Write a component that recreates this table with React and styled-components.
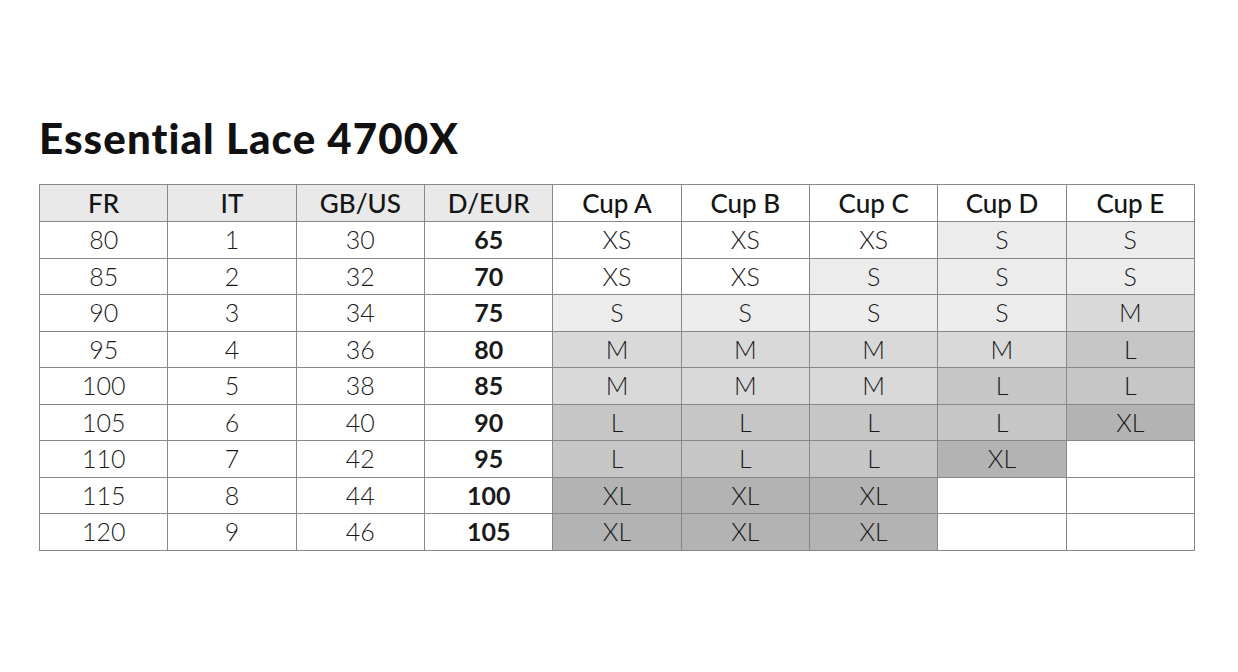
import styled, { createGlobalStyle } from "styled-components";

const GlobalStyle = createGlobalStyle`
  html, body {
    margin: 0;
    padding: 0;
    background: #ffffff;
  }
  body {
    font-family: Lato, "Liberation Sans", sans-serif;
    color: #1a1a1a;
  }
`;

const shades = {
  none: "#ffffff",
  s: "#ececec",
  m: "#d9d9d9",
  l: "#c6c6c6",
  xl: "#b3b3b3",
};

const headers = ["FR", "IT", "GB/US", "D/EUR", "Cup A", "Cup B", "Cup C", "Cup D", "Cup E"];

// [fr, it, gb, eur, cups as [label, shade]]
const rows = [
  ["80", "1", "30", "65", [["XS", "none"], ["XS", "none"], ["XS", "none"], ["S", "s"], ["S", "s"]]],
  ["85", "2", "32", "70", [["XS", "none"], ["XS", "none"], ["S", "s"], ["S", "s"], ["S", "s"]]],
  ["90", "3", "34", "75", [["S", "s"], ["S", "s"], ["S", "s"], ["S", "s"], ["M", "m"]]],
  ["95", "4", "36", "80", [["M", "m"], ["M", "m"], ["M", "m"], ["M", "m"], ["L", "l"]]],
  ["100", "5", "38", "85", [["M", "m"], ["M", "m"], ["M", "m"], ["L", "l"], ["L", "l"]]],
  ["105", "6", "40", "90", [["L", "l"], ["L", "l"], ["L", "l"], ["L", "l"], ["XL", "xl"]]],
  ["110", "7", "42", "95", [["L", "l"], ["L", "l"], ["L", "l"], ["XL", "xl"], ["", "none"]]],
  ["115", "8", "44", "100", [["XL", "xl"], ["XL", "xl"], ["XL", "xl"], ["", "none"], ["", "none"]]],
  ["120", "9", "46", "105", [["XL", "xl"], ["XL", "xl"], ["XL", "xl"], ["", "none"], ["", "none"]]],
];

function App() {
  return (
    <Page>
      <GlobalStyle />
      <Title>Essential Lace 4700X</Title>
      <SizeTable>
        <thead>
          <tr>
            {headers.map((h, i) => (
              <HeadCell key={h} $grey={i < 4}>{h}</HeadCell>
            ))}
          </tr>
        </thead>
        <tbody>
          {rows.map(([fr, it, gb, eur, cups]) => (
            <Row key={fr}>
              <Cell>{fr}</Cell>
              <Cell>{it}</Cell>
              <Cell>{gb}</Cell>
              <Cell $bold>{eur}</Cell>
              {cups.map(([label, shade], i) => (
                <Cell key={i} $shade={shade}>{label}</Cell>
              ))}
            </Row>
          ))}
        </tbody>
      </SizeTable>
    </Page>
  );
}

export default App;

const Page = styled.div`
  padding: 112px 0 0 39px;
  width: 1238px;
  height: 672px;
  box-sizing: border-box;
`;

const Title = styled.h1`
  margin: 0 0 22px 0;
  font-family: Lato, "Liberation Sans", sans-serif;
  font-weight: 900;
  font-size: 42px;
  line-height: 51px;
  color: #111;
  letter-spacing: 1.1px;
  position: relative;
  top: 1px;
`;

const SizeTable = styled.table`
  border-collapse: collapse;
  width: 1156px;
  table-layout: fixed;
  border: 1px solid #888888;
  margin-top: -1px;
`;

const HeadCell = styled.th`
  height: 36px;
  padding: 0;
  border: 1px solid #888888;
  background: ${(p) => (p.$grey ? "#e9e9e9" : "#ffffff")};
  font-weight: 500;
  font-size: 26px;
  color: #151515;
  text-align: center;
  vertical-align: middle;
  line-height: 1;
`;

const Row = styled.tr`
  height: 36.5px;
`;

const Cell = styled.td`
  padding: 0;
  border: 1px solid #888888;
  background: ${(p) => shades[p.$shade] || "#ffffff"};
  font-weight: ${(p) => (p.$bold ? 700 : 300)};
  font-size: 25px;
  color: #1a1a1a;
  text-align: center;
  vertical-align: middle;
  line-height: 1;
`;
